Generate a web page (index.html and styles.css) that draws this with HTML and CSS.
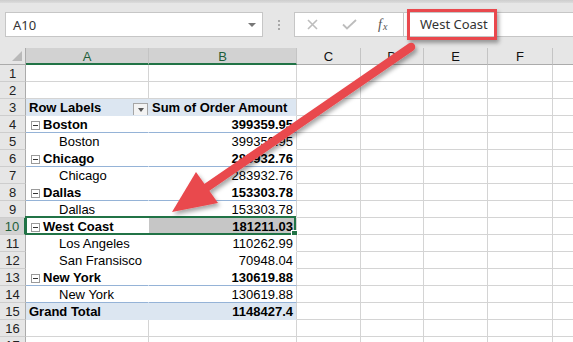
FILE: index.html
```html
<!DOCTYPE html>
<html>
<head>
<meta charset="utf-8">
<link rel="stylesheet" href="styles.css">
</head>
<body>
<div class="app">
  <div class="top">
    <div class="strip"></div>
    <div class="fbar">
      <div class="namebox"><span>A10</span><span class="dd"></span></div>
      <div class="dots"><span></span><span></span><span></span></div>
      <div class="fxbtns">
        <svg class="ico-x" width="11" height="11" viewBox="0 0 11 11"><path d="M1 1 L10 10 M10 1 L1 10" stroke="#bdbdbd" stroke-width="1.6" fill="none"/></svg>
        <svg class="ico-ok" width="15" height="11" viewBox="0 0 15 11"><path d="M1 5.5 L5 9.5 L14 1" stroke="#bdbdbd" stroke-width="1.8" fill="none"/></svg>
        <span class="fx"><i>f</i><i class="x">x</i></span>
      </div>
      <div class="finput">West Coast</div>
    </div>
  </div>

  <div class="sheet">
    <div class="row hdr">
      <div class="cell rh corner"><span class="tri"></span></div>
      <div class="cell a hsel">A</div>
      <div class="cell b hsel">B</div>
      <div class="cell c">C</div>
      <div class="cell d">D</div>
      <div class="cell e">E</div>
      <div class="cell f">F</div>
      <div class="cell g"></div>
    </div>
    <div class="row">
      <div class="cell rh">1</div><div class="cell a"></div><div class="cell b"></div><div class="cell c"></div><div class="cell d"></div><div class="cell e"></div><div class="cell f"></div><div class="cell g"></div>
    </div>
    <div class="row">
      <div class="cell rh">2</div><div class="cell a"></div><div class="cell b"></div><div class="cell c"></div><div class="cell d"></div><div class="cell e"></div><div class="cell f"></div><div class="cell g"></div>
    </div>
    <div class="row">
      <div class="cell rh">3</div>
      <div class="cell a pv ph bold lbl"><span>Row Labels</span><span class="fbtn"><span class="ftri"></span></span></div>
      <div class="cell b pv ph bold">Sum of Order Amount</div>
      <div class="cell c"></div><div class="cell d"></div><div class="cell e"></div><div class="cell f"></div><div class="cell g"></div>
    </div>
    <div class="row">
      <div class="cell rh">4</div>
      <div class="cell a pv pb bold grp"><span class="minus"></span>Boston</div>
      <div class="cell b pv pb bold num">399359.95</div>
      <div class="cell c"></div><div class="cell d"></div><div class="cell e"></div><div class="cell f"></div><div class="cell g"></div>
    </div>
    <div class="row">
      <div class="cell rh">5</div>
      <div class="cell a pv child">Boston</div>
      <div class="cell b pv num">399359.95</div>
      <div class="cell c"></div><div class="cell d"></div><div class="cell e"></div><div class="cell f"></div><div class="cell g"></div>
    </div>
    <div class="row">
      <div class="cell rh">6</div>
      <div class="cell a pv pb bold grp"><span class="minus"></span>Chicago</div>
      <div class="cell b pv pb bold num">283932.76</div>
      <div class="cell c"></div><div class="cell d"></div><div class="cell e"></div><div class="cell f"></div><div class="cell g"></div>
    </div>
    <div class="row">
      <div class="cell rh">7</div>
      <div class="cell a pv child">Chicago</div>
      <div class="cell b pv num">283932.76</div>
      <div class="cell c"></div><div class="cell d"></div><div class="cell e"></div><div class="cell f"></div><div class="cell g"></div>
    </div>
    <div class="row">
      <div class="cell rh">8</div>
      <div class="cell a pv pb bold grp"><span class="minus"></span>Dallas</div>
      <div class="cell b pv pb bold num">153303.78</div>
      <div class="cell c"></div><div class="cell d"></div><div class="cell e"></div><div class="cell f"></div><div class="cell g"></div>
    </div>
    <div class="row">
      <div class="cell rh">9</div>
      <div class="cell a pv child">Dallas</div>
      <div class="cell b pv num">153303.78</div>
      <div class="cell c"></div><div class="cell d"></div><div class="cell e"></div><div class="cell f"></div><div class="cell g"></div>
    </div>
    <div class="row selrow">
      <div class="cell rh rsel">10</div>
      <div class="cell a pv pb bold grp"><span class="minus"></span>West Coast</div>
      <div class="cell b pv pb bold num bsel">181211.03</div>
      <div class="cell c"></div><div class="cell d"></div><div class="cell e"></div><div class="cell f"></div><div class="cell g"></div>
      <div class="selbox"><span class="handle"></span></div>
    </div>
    <div class="row">
      <div class="cell rh">11</div>
      <div class="cell a pv child">Los Angeles</div>
      <div class="cell b pv num">110262.99</div>
      <div class="cell c"></div><div class="cell d"></div><div class="cell e"></div><div class="cell f"></div><div class="cell g"></div>
    </div>
    <div class="row">
      <div class="cell rh">12</div>
      <div class="cell a pv child">San Fransisco</div>
      <div class="cell b pv num">70948.04</div>
      <div class="cell c"></div><div class="cell d"></div><div class="cell e"></div><div class="cell f"></div><div class="cell g"></div>
    </div>
    <div class="row">
      <div class="cell rh">13</div>
      <div class="cell a pv pb bold grp"><span class="minus"></span>New York</div>
      <div class="cell b pv pb bold num">130619.88</div>
      <div class="cell c"></div><div class="cell d"></div><div class="cell e"></div><div class="cell f"></div><div class="cell g"></div>
    </div>
    <div class="row">
      <div class="cell rh">14</div>
      <div class="cell a pv pb child">New York</div>
      <div class="cell b pv pb num">130619.88</div>
      <div class="cell c"></div><div class="cell d"></div><div class="cell e"></div><div class="cell f"></div><div class="cell g"></div>
    </div>
    <div class="row">
      <div class="cell rh">15</div>
      <div class="cell a pv ph bold">Grand Total</div>
      <div class="cell b pv ph bold num">1148427.4</div>
      <div class="cell c"></div><div class="cell d"></div><div class="cell e"></div><div class="cell f"></div><div class="cell g"></div>
    </div>
    <div class="row">
      <div class="cell rh">16</div><div class="cell a"></div><div class="cell b"></div><div class="cell c"></div><div class="cell d"></div><div class="cell e"></div><div class="cell f"></div><div class="cell g"></div>
    </div>
    <div class="row">
      <div class="cell rh">17</div><div class="cell a"></div><div class="cell b"></div><div class="cell c"></div><div class="cell d"></div><div class="cell e"></div><div class="cell f"></div><div class="cell g"></div>
    </div>
  </div>

  <div class="callout"></div>
  <svg class="arrow" width="573" height="342" viewBox="0 0 573 342">
    <defs>
      <filter id="sh" x="-20%" y="-20%" width="140%" height="140%">
        <feDropShadow dx="2" dy="3" stdDeviation="2" flood-color="#000" flood-opacity="0.35"/>
      </filter>
    </defs>
    <g filter="url(#sh)">
      <line x1="411" y1="47" x2="203" y2="190" stroke="#e9484d" stroke-width="8.5" stroke-linecap="round"/>
      <polygon points="172,212 218,203 196,172" fill="#e9484d"/>
    </g>
  </svg>
</div>
</body>
</html>
```

FILE: styles.css
```css
html, body {
  margin: 0;
  padding: 0;
}
body {
  width: 573px;
  height: 342px;
  overflow: hidden;
  font-family: "Liberation Sans", Arial, sans-serif;
}
.app {
  position: relative;
  width: 573px;
  height: 342px;
  overflow: hidden;
  background: #fff;
}
.top {
  height: 48px;
  background: #e6e6e6;
  display: flex;
  flex-direction: column;
}
.strip {
  height: 3px;
  background: linear-gradient(#cdcdcd, #dcdcdc);
}
.fbar {
  display: flex;
  align-items: flex-start;
  padding-top: 9px;
  padding-left: 5px;
}
.namebox {
  width: 258px;
  height: 25px;
  box-sizing: border-box;
  border: 1px solid #c6c6c6;
  background: #fff;
  display: flex;
  align-items: center;
  justify-content: space-between;
  padding: 0 6px 0 7px;
  font: 13px "Noto Sans", sans-serif;
  color: #333;
  flex-shrink: 0;
}
.dd {
  width: 0;
  height: 0;
  border-left: 4px solid transparent;
  border-right: 4px solid transparent;
  border-top: 4px solid #777;
  margin-top: 1px;
}
.dots {
  width: 31px;
  height: 25px;
  display: flex;
  flex-direction: column;
  align-items: center;
  justify-content: center;
  gap: 2px;
  flex-shrink: 0;
}
.dots span {
  width: 2px;
  height: 2px;
  background: #a8a8a8;
}
.fxbtns {
  width: 109px;
  height: 25px;
  box-sizing: border-box;
  border: 1px solid #c6c6c6;
  border-right: none;
  background: #fff;
  display: flex;
  align-items: center;
  flex-shrink: 0;
}
.ico-x { margin-left: 12px; }
.ico-ok { margin-left: 24px; }
.fx {
  margin-left: 21px;
  font-family: "Liberation Serif", "Times New Roman", serif;
  color: #555;
  font-size: 14px;
  line-height: 1;
}
.fx .x {
  font-size: 10px;
  vertical-align: -1px;
  margin-left: 1px;
}
.finput {
  flex: 1;
  height: 25px;
  box-sizing: border-box;
  border: 1px solid #c6c6c6;
  border-right: none;
  background: #fff;
  padding-left: 16px;
  font: 13px/23px "Noto Sans", sans-serif;
  color: #333;
}

.sheet {
  display: flex;
  flex-direction: column;
}
.row {
  display: flex;
  height: 17px;
  position: relative;
}
.cell {
  box-sizing: border-box;
  height: 17px;
  flex-shrink: 0;
  border-right: 1px solid #d4d4d4;
  border-bottom: 1px solid #d4d4d4;
  font-size: 13px;
  line-height: 16px;
  padding: 1px 3px 0;
  white-space: nowrap;
  overflow: hidden;
  color: #000;
}
.rh { width: 26px; }
.a { width: 123px; }
.b { width: 148px; }
.c { width: 64px; }
.d { width: 63px; }
.e { width: 64px; }
.f { width: 65px; }
.g { width: 64px; }

.rh {
  background: #e6e6e6;
  border-right-color: #ababab;
  border-bottom-color: #cdcdcd;
  text-align: center;
  padding: 1px 0 0;
  color: #222;
}
.rsel {
  background: #d2d2d2;
  color: #1e5e3a;
  border-right: 2px solid #217346;
}

.hdr .cell {
  background: #e6e6e6;
  border-right-color: #c4c4c4;
  border-bottom-color: #ababab;
  text-align: center;
  line-height: 15px;
  color: #111;
}
.hdr .corner {
  border-right-color: #ababab;
  display: flex;
  align-items: flex-end;
  justify-content: flex-end;
  padding: 0 3px 3px 0;
}
.tri {
  width: 0;
  height: 0;
  border-left: 10px solid transparent;
  border-bottom: 10px solid #b9b9b9;
}
.hdr .hsel {
  background: #d2d2d2;
  color: #1e5e3a;
  border-bottom: 2px solid #217346;
}

/* pivot */
.pv {
  background: #fff;
  border-right-color: #fff;
  border-bottom-color: #fff;
}
.b.pv { border-right-color: #d4d4d4; }
.ph {
  background: #dce6f1;
  border-bottom-color: #dce6f1;
}
.a.ph { border-right-color: #dce6f1; }
.pb { border-bottom-color: #95b3d7; }
.bold { font-weight: bold; }
.num { text-align: right; }
.lbl {
  display: flex;
  justify-content: space-between;
  align-items: flex-start;
  padding-right: 0;
}
.fbtn {
  width: 15px;
  height: 13px;
  box-sizing: border-box;
  border: 1px solid #a6a6a6;
  background: #f3f3f3;
  margin-top: 3px;
  display: flex;
  align-items: center;
  justify-content: center;
}
.ftri {
  width: 0;
  height: 0;
  border-left: 3.5px solid transparent;
  border-right: 3.5px solid transparent;
  border-top: 4px solid #555;
}
.grp {
  display: flex;
  align-items: flex-start;
  padding-left: 5px;
}
.minus {
  width: 9px;
  height: 9px;
  box-sizing: border-box;
  border: 1px solid #9a9a9a;
  background: #fff;
  margin: 4px 3px 0 0;
  display: flex;
  align-items: center;
  justify-content: center;
  flex-shrink: 0;
}
.minus::before {
  content: "";
  width: 5px;
  height: 1px;
  background: #333;
}
.child { padding-left: 33px; }
.bsel { background: #c6c6c6; }

.selbox {
  position: absolute;
  left: 25px;
  top: -2px;
  width: 271px;
  height: 19px;
  box-sizing: border-box;
  border: 2px solid #217346;
  pointer-events: none;
}
.handle {
  position: absolute;
  right: -4px;
  bottom: -4px;
  width: 5px;
  height: 5px;
  background: #217346;
  border: 1px solid #fff;
}

.callout {
  position: absolute;
  left: 407px;
  top: 9px;
  width: 90px;
  height: 31px;
  box-sizing: border-box;
  border: 3px solid #e9484d;
  box-shadow: 2px 3px 4px rgba(0, 0, 0, 0.35);
}
.arrow {
  position: absolute;
  left: 0;
  top: 0;
  pointer-events: none;
}
```
